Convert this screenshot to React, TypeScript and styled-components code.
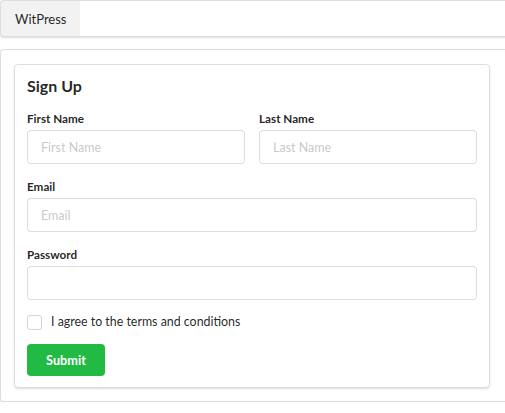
import React from "react";
import styled, { createGlobalStyle } from "styled-components";

const Global = createGlobalStyle`
  html, body { margin: 0; padding: 0; background: #fff; overflow: hidden; }
  body { font-family: Lato, "Open Sans", "Liberation Sans", sans-serif; color: rgba(0,0,0,0.87); font-size: 14px; }
  * { box-sizing: border-box; }
`;

const Page = styled.div`
  display: flex;
  flex-direction: column;
  gap: 12px;
  margin-right: -3px;
`;

const Menu = styled.nav`
  display: flex;
  height: 37px;
  border: 1px solid rgba(34, 36, 38, 0.15);
  border-radius: 4px;
  box-shadow: 0 1px 2px 0 rgba(34, 36, 38, 0.15);
  background: #fff;
  overflow: hidden;
`;

const MenuItem = styled.a<{ $active?: boolean }>`
  display: flex;
  align-items: center;
  width: 79px;
  padding: 0 0 0 14px;
  font-size: 13px;
  color: rgba(0, 0, 0, 0.87);
  background: ${(p) => (p.$active ? "rgba(0,0,0,0.05)" : "transparent")};
`;

const Segment = styled.section`
  border: 1px solid rgba(34, 36, 38, 0.15);
  border-radius: 4px;
  box-shadow: 0 1px 2px 0 rgba(34, 36, 38, 0.15);
  padding: 14px 17px 13px 13px;
  background: #fff;
`;

const Card = styled.form`
  border: 1px solid rgba(34, 36, 38, 0.15);
  border-radius: 4px;
  box-shadow: 0 1px 2px 0 rgba(34, 36, 38, 0.15);
  padding: 11px 12px 11px 12px;
  display: flex;
  flex-direction: column;
`;

const Title = styled.h3`
  margin: 0 0 14px 0;
  font-size: 16px;
  font-weight: 700;
  line-height: 20px;
`;

const Row = styled.div`
  display: grid;
  grid-template-columns: 1fr 1fr;
  gap: 14px;
`;

const Field = styled.div`
  display: flex;
  flex-direction: column;
  margin-bottom: 14px;
`;

const Label = styled.label`
  font-size: 11.7px;
  font-weight: 700;
  line-height: 16px;
  margin-bottom: 4px;
`;

const Input = styled.input`
  height: 34px;
  border: 1px solid rgba(34, 36, 38, 0.15);
  border-radius: 4px;
  padding: 0 13px;
  font-family: inherit;
  font-size: 12.5px;
  color: rgba(0, 0, 0, 0.87);
  outline: none;
  &::placeholder { color: rgba(191, 191, 191, 0.87); }
`;

const CheckRow = styled.label`
  display: flex;
  align-items: center;
  gap: 9px;
  font-size: 12.4px;
  line-height: 16px;
  margin: 0 0 14px 0;
`;

const Box = styled.span`
  width: 15px;
  height: 15px;
  border: 1px solid #d4d4d5;
  border-radius: 3px;
  background: #fff;
`;

const Button = styled.button`
  align-self: flex-start;
  width: 78px;
  height: 32px;
  border: none;
  border-radius: 4px;
  background: #21ba45;
  color: #fff;
  font-family: inherit;
  font-weight: 700;
  font-size: 12.7px;
`;

export default function App() {
  return (
    <>
      <Global />
      <Page>
        <Menu>
          <MenuItem $active>WitPress</MenuItem>
        </Menu>
        <Segment>
          <Card onSubmit={(e) => e.preventDefault()}>
            <Title>Sign Up</Title>
            <Row>
              <Field>
                <Label>First Name</Label>
                <Input placeholder="First Name" />
              </Field>
              <Field>
                <Label>Last Name</Label>
                <Input placeholder="Last Name" />
              </Field>
            </Row>
            <Field>
              <Label>Email</Label>
              <Input placeholder="Email" />
            </Field>
            <Field>
              <Label>Password</Label>
              <Input type="password" />
            </Field>
            <CheckRow>
              <Box />
              I agree to the terms and conditions
            </CheckRow>
            <Button type="submit">Submit</Button>
          </Card>
        </Segment>
      </Page>
    </>
  );
}
